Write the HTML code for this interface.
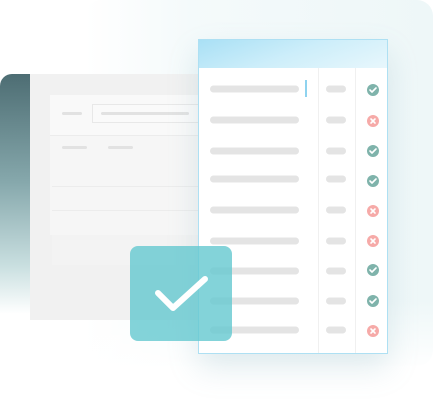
<!DOCTYPE html>
<html><head><style>
html,body{margin:0;padding:0;width:433px;height:408px;overflow:hidden;background:#fff;font-family:"Liberation Sans",sans-serif}
.a{position:absolute}
</style></head><body>
<div class="a" style="left:85px;top:0;width:348px;height:366px;border-radius:16px;background:linear-gradient(90deg,rgba(240,248,249,0) 0%,rgba(240,248,249,0.7) 30%,#eef7f8 100%)"></div>
<div class="a" style="left:60px;top:300px;width:373px;height:70px;background:linear-gradient(180deg,rgba(255,255,255,0) 0%,#fff 100%)"></div>
<div class="a" style="left:0;top:74px;width:34px;height:240px;border-radius:12px 0 0 0;background:linear-gradient(180deg,#4d6d73 0%,#86a8ac 45%,#c9dfe0 80%,rgba(230,242,242,0) 100%)"></div>
<div class="a" style="left:30px;top:74px;width:170px;height:246px;background:#f1f1f1"></div>
<div class="a" style="left:50px;top:95px;width:150px;height:140px;background:#f6f6f6"></div>
<div class="a" style="left:50px;top:95px;width:150px;height:40px;background:#f9f9f9;border-bottom:1px solid #ececec"></div>
<div class="a" style="left:62px;top:112px;width:20px;height:3px;background:#e2e2e2;border-radius:2px"></div>
<div class="a" style="left:92px;top:104px;width:108px;height:17px;border:1px solid #e8e8e8;background:#fafafa"></div>
<div class="a" style="left:101px;top:112px;width:88px;height:3px;background:#e2e2e2;border-radius:2px"></div>
<div class="a" style="left:62px;top:146px;width:25px;height:3px;background:#e2e2e2;border-radius:2px"></div>
<div class="a" style="left:108px;top:146px;width:25px;height:3px;background:#e2e2e2;border-radius:2px"></div>
<div class="a" style="left:52px;top:186px;width:148px;height:1px;background:#ececec"></div>
<div class="a" style="left:52px;top:210px;width:148px;height:1px;background:#ececec"></div>
<div class="a" style="left:52px;top:235px;width:148px;height:30px;background:#f3f3f3"></div>
<div class="a" style="left:198px;top:39px;width:190px;height:315px;background:#fff;border:1px solid #aee0f3;box-sizing:border-box;box-shadow:0 14px 28px rgba(120,170,180,0.22)"></div>
<div class="a" style="left:199px;top:40px;width:188px;height:28px;background:linear-gradient(160deg,#a9e0f5 0%,#cdeefa 50%,#e8f7fc 100%)"></div>
<div class="a" style="left:318px;top:68px;width:1px;height:285px;background:#f0f0f0"></div>
<div class="a" style="left:355px;top:68px;width:1px;height:285px;background:#f0f0f0"></div>
<div class="a" style="left:305px;top:80px;width:1.5px;height:17px;background:#8fd3ef"></div>
<svg class="a" style="left:0;top:0" width="433" height="408">
<g fill="#e4e4e4">
<rect x="210" y="85.5" width="89" height="7" rx="3.5"/><rect x="326" y="85.5" width="20" height="7" rx="3.5"/>
<rect x="210" y="116.5" width="89" height="7" rx="3.5"/><rect x="326" y="116.5" width="20" height="7" rx="3.5"/>
<rect x="210" y="147.5" width="89" height="7" rx="3.5"/><rect x="326" y="147.5" width="20" height="7" rx="3.5"/>
<rect x="210" y="175.5" width="89" height="7" rx="3.5"/><rect x="326" y="175.5" width="20" height="7" rx="3.5"/>
<rect x="210" y="206.5" width="89" height="7" rx="3.5"/><rect x="326" y="206.5" width="20" height="7" rx="3.5"/>
<rect x="210" y="237.5" width="89" height="7" rx="3.5"/><rect x="326" y="237.5" width="20" height="7" rx="3.5"/>
<rect x="210" y="267.5" width="89" height="7" rx="3.5"/><rect x="326" y="267.5" width="20" height="7" rx="3.5"/>
<rect x="210" y="297.5" width="89" height="7" rx="3.5"/><rect x="326" y="297.5" width="20" height="7" rx="3.5"/>
<rect x="210" y="326.5" width="89" height="7" rx="3.5"/><rect x="326" y="326.5" width="20" height="7" rx="3.5"/>
</g>
<g stroke-width="1.6" stroke-linecap="round" stroke-linejoin="round" fill="none">
<circle cx="373" cy="90" r="6" fill="#7fb3ab"/><path d="M370 90l2 2 4-4" stroke="#fff"/>
<circle cx="373" cy="121" r="6" fill="#f6aaa8"/><path d="M371 119l4 4M375 119l-4 4" stroke="#fff"/>
<circle cx="373" cy="151" r="6" fill="#7fb3ab"/><path d="M370 151l2 2 4-4" stroke="#fff"/>
<circle cx="373" cy="181" r="6" fill="#7fb3ab"/><path d="M370 181l2 2 4-4" stroke="#fff"/>
<circle cx="373" cy="211" r="6" fill="#f6aaa8"/><path d="M371 209l4 4M375 209l-4 4" stroke="#fff"/>
<circle cx="373" cy="241" r="6" fill="#f6aaa8"/><path d="M371 239l4 4M375 239l-4 4" stroke="#fff"/>
<circle cx="373" cy="270" r="6" fill="#7fb3ab"/><path d="M370 270l2 2 4-4" stroke="#fff"/>
<circle cx="373" cy="301" r="6" fill="#7fb3ab"/><path d="M370 301l2 2 4-4" stroke="#fff"/>
<circle cx="373" cy="331" r="6" fill="#f6aaa8"/><path d="M371 329l4 4M375 329l-4 4" stroke="#fff"/>
</g>
<rect x="130" y="246" width="102" height="95" rx="8" fill="rgba(100,200,208,0.8)"/>
<path d="M158 293l15 15 32-29" stroke="#fff" stroke-width="6" fill="none" stroke-linecap="round" stroke-linejoin="round"/>
</svg>
</body></html>
